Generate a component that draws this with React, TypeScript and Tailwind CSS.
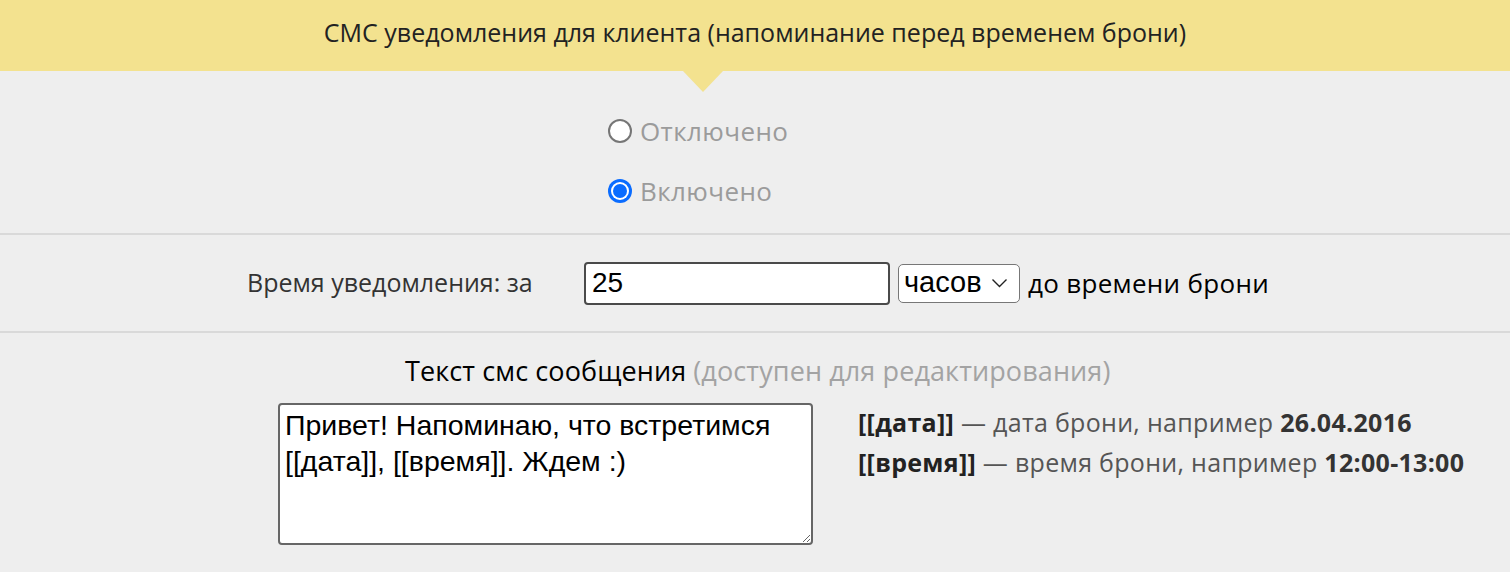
import React, { useState } from "react";

const font = { fontFamily: "'Open Sans', 'Noto Sans', sans-serif" };

const Radio = ({ checked, label, onClick }: { checked: boolean; label: string; onClick: () => void }) => (
  <label className="flex items-center gap-[8px] cursor-pointer h-[40px]" onClick={onClick}>
    {checked ? (
      <span className="w-[24px] h-[24px] rounded-full bg-[#0a6cff] flex items-center justify-center">
        <span className="w-[18px] h-[18px] rounded-full bg-white flex items-center justify-center">
          <span className="w-[14px] h-[14px] rounded-full bg-[#0a6cff]" />
        </span>
      </span>
    ) : (
      <span className="w-[24px] h-[24px] rounded-full border-2 border-[#767676] bg-white" />
    )}
    <span className="text-[26px] tracking-[0.4px] text-[#9b9b9b]">{label}</span>
  </label>
);

export default function App() {
  const [on, setOn] = useState(true);
  const [hours, setHours] = useState("25");
  const [text, setText] = useState("Привет! Напоминаю, что встретимся [[дата]], [[время]]. Ждем :)");

  return (
    <div className="w-[1510px] h-[572px] bg-[#eeeeee] overflow-hidden" style={font}>
      <div className="relative h-[71px] bg-[#f3e28f] flex items-center justify-center pb-[6px]">
        <h1 className="text-[25px] text-[#222]">
          СМС уведомления для клиента (напоминание перед временем брони)
        </h1>
        <div className="absolute left-[683px] top-[71px] w-0 h-0 border-l-[20px] border-r-[20px] border-t-[21px] border-l-transparent border-r-transparent border-t-[#f3e28f]" />
      </div>

      <div className="h-[164px] pl-[608px] pt-[40px] flex flex-col gap-[20px] border-b-2 border-[#d9d9d9]">
        <Radio checked={!on} label="Отключено" onClick={() => setOn(false)} />
        <Radio checked={on} label="Включено" onClick={() => setOn(true)} />
      </div>

      <div className="h-[98px] flex items-center pl-[247px] border-b-2 border-[#d9d9d9]">
        <span className="text-[25px] text-[#333] w-[337px]">Время уведомления: за</span>
        <input
          className="w-[306px] h-[43px] bg-white border-2 border-[#4a4a4a] rounded-[4px] px-[6px] text-[28px] text-black outline-none [font-family:'Liberation_Sans',Arial,sans-serif]"
          value={hours}
          onChange={(e) => setHours(e.target.value)}
        />
        <div className="ml-[8px] w-[122px] h-[39px] bg-white border-[1.5px] border-[#777] rounded-[5px] flex items-center pl-[5px] gap-[9px] text-[29px] text-black [font-family:'Liberation_Sans',Arial,sans-serif]">
          <span>часов</span>
          <svg width="17" height="10" viewBox="0 0 17 10" fill="none" stroke="#222" strokeWidth="1.4">
            <path d="M1.5 1.5l7 7 7-7" />
          </svg>
        </div>
        <span className="ml-[8px] text-[26px] tracking-[0.3px] text-black">до времени брони</span>
      </div>

      <div className="pt-[16px]">
        <div className="pl-[405px] text-[27px] tracking-[0.1px] text-black h-[44px] flex items-center">
          Текст смс сообщения<span className="text-[#a3a3a3] ml-[7px]">(доступен для редактирования)</span>
        </div>
        <div className="flex pl-[278px] mt-[10px]">
          <textarea
            className="w-[535px] h-[142px] bg-white border-2 border-[#666] rounded-[4px] px-[5px] pt-[2px] text-[28.5px] leading-[36px] text-black outline-none resize [font-family:'Liberation_Sans',Arial,sans-serif]"
            value={text}
            onChange={(e) => setText(e.target.value)}
          />
          <div className="ml-[45px] text-[25px] tracking-[0.3px] text-[#555] leading-[40px] -mt-[1px]">
            <div>
              <b className="text-[#222]">[[дата]]</b> — дата брони, например <b className="text-[#333]">26.04.2016</b>
            </div>
            <div>
              <b className="text-[#222]">[[время]]</b> — время брони, например <b className="text-[#333]">12:00-13:00</b>
            </div>
          </div>
        </div>
      </div>
    </div>
  );
}
